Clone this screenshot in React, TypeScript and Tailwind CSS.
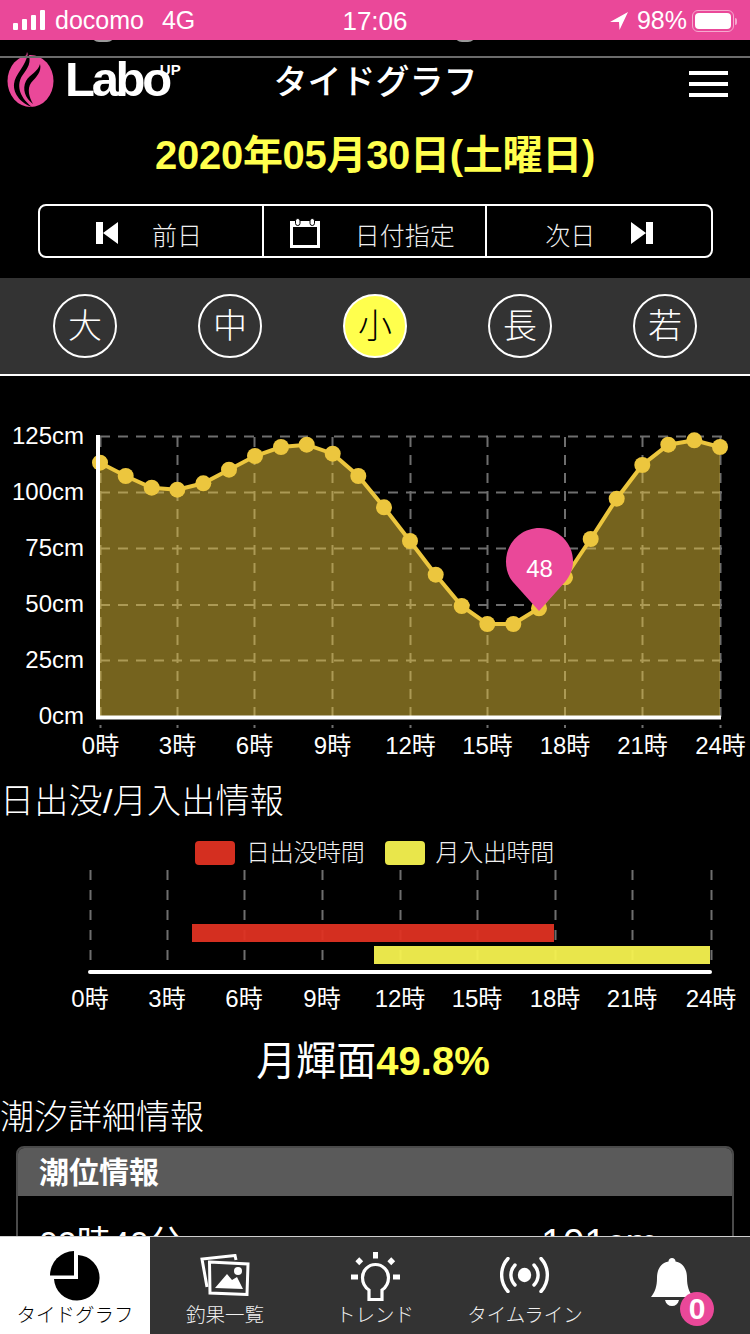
import React from "react";

const JP = "font-['Liberation_Sans','Noto_Sans_CJK_JP',sans-serif]";

const tidePoints: [number, number][] = [
  [100, 462.7], [125.7, 476], [151.7, 487.7], [177.3, 489.7], [203.3, 483.3],
  [229, 469.7], [255, 456], [281, 447], [306.7, 444.7], [332.7, 453.7],
  [358.3, 476], [384, 507.3], [410, 541], [435.7, 574.7], [461.7, 606],
  [487.3, 624], [513.3, 624], [539, 608.3], [565, 577.3], [590.7, 539],
  [616.7, 498.7], [642.3, 465], [668.3, 444.7], [694.3, 440.3], [720, 447],
];
const gridX = [100.5, 177.5, 254.5, 332.5, 410.5, 487.5, 565, 642.5, 720.5];
const gridY = [436.5, 492.5, 548.5, 605, 660.5];
const yLabels = ["125cm", "100cm", "75cm", "50cm", "25cm", "0cm"];
const hours = ["0時", "3時", "6時", "9時", "12時", "15時", "18時", "21時", "24時"];
const ages = ["大", "中", "小", "長", "若"];

function StatusBar() {
  return (
    <div className="flex h-10 items-center justify-between bg-[#ea4899] px-[13px] pt-[2px] font-['Liberation_Sans',sans-serif] text-[25px] text-white">
      <div className="flex w-[247px] items-center">
        <div className="-mt-[2px] flex items-end gap-[4px]">
          <span className="h-[7px] w-[5px] rounded-[1px] bg-white" />
          <span className="h-[11px] w-[5px] rounded-[1px] bg-white" />
          <span className="h-[15px] w-[5px] rounded-[1px] bg-white" />
          <span className="h-[20px] w-[5px] rounded-[1px] bg-white" />
        </div>
        <span className="ml-[10px]">docomo</span>
        <span className="ml-[18px]">4G</span>
      </div>
      <span className="text-[26px]">17:06</span>
      <div className="flex w-[247px] items-center justify-end">
        <svg width="18" height="18" viewBox="0 0 18 18" className="mr-[9px]">
          <path d="M18 0 L0 10 L9 10 L9.5 18 Z" fill="#fff" />
        </svg>
        <span>98%</span>
        <div className="ml-[5px] flex h-[22px] w-[42px] items-center rounded-[6px] border border-[#f6a9cf] p-[2px]">
          <div className="h-full w-full rounded-[4px] bg-white" />
        </div>
        <span className="ml-[1px] h-[7px] w-[2px] rounded-r-sm bg-[#f6a9cf]" />
      </div>
    </div>
  );
}

function Logo() {
  return (
    <div className="flex items-center">
      <svg width="47" height="56" viewBox="0 0 47 56" className="shrink-0">
        <path d="M20 0 C21 3 22 5 24 6 L18 10 Z" fill="#ea4899" />
        <ellipse cx="23.5" cy="29" rx="23" ry="26" fill="#ea4899" />
        <path d="M21 1 C25 10 21 16 15 24 C10 32 11 44 25 55 C15 52 6 42 7 32 C8 22 19 14 21 1 Z" fill="#000" />
        <path d="M33 12 C35 20 29 25 24 31 C20 37 22 45 26 52 C18 46 15 37 19 29 C23 22 31 20 33 12 Z" fill="#000" />
      </svg>
      <span className="ml-[11px] -mt-[2px] font-['Liberation_Sans',sans-serif] text-[49px] font-bold leading-none tracking-[-3.3px] text-white">
        Labo
      </span>
      <span className="-ml-[9px] mb-[22px] w-0 font-['Liberation_Sans',sans-serif] text-[15px] font-bold leading-none text-white">
        UP
      </span>
    </div>
  );
}

function Header() {
  return (
    <div>
      <div className="relative h-[18px] overflow-hidden border-b-2 border-[#6b6b6b]">
        <span className="absolute left-[91px] top-[-14px] h-[16px] w-[24px] rounded-full bg-[#9a9a9a]" />
        <span className="absolute left-[454px] top-[-14px] h-[16px] w-[22px] rounded-full bg-[#9a9a9a]" />
      </div>
      <div className="grid h-[56px] grid-cols-[1fr_auto_1fr] items-center pl-[7px] pr-[22px]">
        <div className="-mt-[12px]">
          <Logo />
        </div>
        <span className={`-mt-[8px] ml-[8px] mr-[-8px] text-[34px] font-medium leading-[44px] text-white ${JP}`}>
          タイドグラフ
        </span>
        <div className="-mt-[5px] flex flex-col items-end gap-[7px]">
          <span className="h-1 w-[39px] bg-white" />
          <span className="h-1 w-[39px] bg-white" />
          <span className="h-1 w-[39px] bg-white" />
        </div>
      </div>
    </div>
  );
}

function DateNav() {
  return (
    <div>
      <h1 className={`mt-[16px] text-center text-[40px] font-bold leading-[50px] tracking-[-0.3px] text-[#ffff4d] ${JP}`}>
        2020年05月30日(土曜日)
      </h1>
      <div className={`ml-[38px] mr-[37px] mt-[24px] grid h-[54px] grid-cols-3 divide-x-2 divide-white rounded-lg border-2 border-white text-[25px] font-light text-[#f0f0f0] ${JP}`}>
        <div className="flex items-center pl-[56px]">
          <svg width="22" height="22" viewBox="0 0 22 22" fill="#fff" className="mt-[4px]">
            <path d="M0 0h7v22H0z M7 11 L22 0 V22 Z" />
          </svg>
          <span className="ml-[34px] mt-[12px]">前日</span>
        </div>
        <div className="flex items-center pl-[26px]">
          <svg width="30" height="30" viewBox="0 0 30 30" fill="none" className="mt-[4px]">
            <path d="M1.5 5h27v23.5h-27z" stroke="#fff" strokeWidth="3" />
            <path d="M0 3h30v6H0z" fill="#fff" />
            <rect x="5.5" y="0.5" width="4.5" height="7" rx="2.2" fill="#fff" stroke="#000" strokeWidth="1" />
            <rect x="20" y="0.5" width="4.5" height="7" rx="2.2" fill="#fff" stroke="#000" strokeWidth="1" />
          </svg>
          <span className="ml-[35px] mt-[12px]">日付指定</span>
        </div>
        <div className="flex items-center pl-[58px]">
          <span className="mt-[12px]">次日</span>
          <svg width="22" height="22" viewBox="0 0 22 22" fill="#fff" className="ml-[36px] mt-[4px]">
            <path d="M15 0h7v22h-7z M15 11 L0 0 V22 Z" />
          </svg>
        </div>
      </div>
    </div>
  );
}

function AgeTabs() {
  return (
    <div className="mt-[20px] flex h-[98px] items-center justify-between border-b-2 border-white bg-[#333333] px-[53px]">
      {ages.map((age) => {
        const active = age === "小";
        return (
          <span
            key={age}
            className={`flex h-[64px] w-[64px] items-center justify-center rounded-full border-2 border-white text-[34px] font-light leading-none ${JP} ${
              active ? "bg-[#ffff4d] text-black" : "text-white"
            }`}
          >
            {age}
          </span>
        );
      })}
    </div>
  );
}

function TideChart() {
  const line = tidePoints.map(([x, y]) => `${x},${y}`).join(" ");
  const area = `100,717 ${line} 720,717`;
  return (
    <svg width="750" height="388" viewBox="0 376 750 388" className="block">
      {gridY.map((y) => (
        <line key={y} x1="100" x2="722" y1={y} y2={y} stroke="#6e6e6e" strokeWidth="2" strokeDasharray="10 8" />
      ))}
      {gridX.map((x) => (
        <line key={x} x1={x} x2={x} y1="437" y2="728" stroke="#6e6e6e" strokeWidth="2" strokeDasharray="10 8" />
      ))}
      <polygon points={area} fill="#eac53c" fillOpacity="0.5" />
      <polyline points={line} fill="none" stroke="#ecc63e" strokeWidth="4" />
      {tidePoints.map(([x, y]) => (
        <circle key={x} cx={x} cy={y} r="8" fill="#ecc63e" />
      ))}
      <path d="M98 435 V717.5 H721" fill="none" stroke="#fff" strokeWidth="4" />
      {yLabels.map((label, i) => (
        <text
          key={label}
          x="84"
          y={444 + i * 56}
          textAnchor="end"
          fill="#fff"
          fontSize="24"
          fontFamily="'Liberation Sans', sans-serif"
        >
          {label}
        </text>
      ))}
      {hours.map((label, i) => (
        <text
          key={label}
          x={gridX[i]}
          y="754"
          textAnchor="middle"
          fill="#fff"
          fontSize="24"
          fontFamily="'Liberation Sans', 'Noto Sans CJK JP', sans-serif"
        >
          {label}
        </text>
      ))}
      <path
        d="M539 611 L513 582 C508 576 506 569 506 561.5 C506 543 521 528 539.5 528 C558 528 573 543 573 561.5 C573 569 570 576 565 582 Z"
        fill="#ea4899"
      />
      <text x="539.5" y="577" textAnchor="middle" fill="#fff" fontSize="24" fontFamily="'Liberation Sans', sans-serif">
        48
      </text>
    </svg>
  );
}

function SunMoon() {
  const barX = [90, 167, 244, 322, 400, 477, 555, 632, 711];
  return (
    <div>
      <h2 className={`mt-[15px] text-[34px] font-light leading-[44px] tracking-[0.3px] text-white ${JP}`}>日出没/月入出情報</h2>
      <div className={`mt-[17px] flex h-[26px] items-center justify-center pr-[1px] text-[24px] font-light tracking-[-0.3px] text-[#f0f0f0] ${JP}`}>
        <span className="h-[24px] w-[40px] rounded-[4px] bg-[#d42f20]" />
        <span className="ml-[11px]">日出没時間</span>
        <span className="ml-[20px] h-[24px] w-[40px] rounded-[4px] bg-[#e9e64b]" />
        <span className="ml-[11px]">月入出時間</span>
      </div>
      <div className="relative mt-[4px] h-[104px]">
        <svg width="750" height="90" viewBox="0 0 750 90" className="absolute left-0 top-0">
          {barX.map((x) => (
            <line key={x} x1={x + 0.5} x2={x + 0.5} y1="0" y2="90" stroke="#6e6e6e" strokeWidth="2" strokeDasharray="10 10" />
          ))}
        </svg>
        <div className="absolute left-[192px] top-[54px] h-[18px] w-[362px] bg-[#df3122]/95" />
        <div className="absolute left-[374px] top-[76px] h-[18px] w-[336px] bg-[#f5f24f]/95" />
        <div className="absolute left-[88px] top-[100px] h-1 w-[624px] rounded-full bg-white" />
      </div>
      <div className="relative mt-[9px] h-[32px]">
        {hours.map((label, i) => (
          <span
            key={label}
            className={`absolute top-0 -translate-x-1/2 whitespace-nowrap text-[24px] leading-[32px] text-white ${JP}`}
            style={{ left: barX[i] }}
          >
            {label}
          </span>
        ))}
      </div>
    </div>
  );
}

function TideDetail() {
  return (
    <div>
      <p className={`mt-[20px] pr-[4px] text-center text-[40px] leading-[52px] text-white ${JP}`}>
        月輝面<span className="font-bold text-[#ffff4d]">49.8%</span>
      </p>
      <h2 className={`mt-[8px] text-[34px] font-light leading-[44px] text-white ${JP}`}>潮汐詳細情報</h2>
      <div className="mx-[16px] mt-[7px] overflow-hidden rounded-t-lg border-2 border-[#4a4a4a]">
        <div className={`flex h-[48px] items-center bg-[#5a5a5a] pl-[21px] text-[30px] font-bold text-white ${JP}`}>
          潮位情報
        </div>
        <div className={`flex items-center justify-between pl-[21px] pr-[74px] pt-[18px] text-white ${JP}`}>
          <span className="text-[34px]">09時40分</span>
          <span className="text-[39px]">101cm</span>
        </div>
      </div>
    </div>
  );
}

function NavItem({ label, active, children }: { label: string; active?: boolean; children: React.ReactNode }) {
  return (
    <div className={`relative flex w-[150px] flex-col items-center ${active ? "bg-white text-black" : "text-[#f0f0f0]"}`}>
      <div className="flex h-[65px] items-end justify-center">{children}</div>
      <span className={`text-[19.5px] font-light leading-[26px] ${JP}`}>{label}</span>
    </div>
  );
}

function BottomNav() {
  return (
    <div className="absolute bottom-0 left-0 flex h-[98px] w-[750px] border-t border-[#cfcfcf] bg-[#333333]">
      <NavItem label="タイドグラフ" active>
        <svg width="50" height="50" viewBox="0 0 50 50" fill="#000" className="mb-[1px]">
          <path d="M28 4 A22.8 22.8 0 1 1 4 28 H28 Z" />
          <path d="M24 0 V24.5 H0 A24.5 24.5 0 0 1 24 0 Z" />
        </svg>
      </NavItem>
      <NavItem label="釣果一覧">
        <svg width="50" height="42" viewBox="0 0 50 42" fill="none" className="mb-[6px]">
          <path d="M7 33 L2 5 L35 1.5 L36 6" stroke="#fff" strokeWidth="3" />
          <path d="M9.5 8 L48 10 L47 40.5 L10 39 Z" stroke="#fff" strokeWidth="3" fill="#333333" />
          <path d="M15 34 L27 20 L32 26 L37 23 L43 35 Z" fill="#fff" />
          <circle cx="38" cy="17" r="4" fill="#fff" />
        </svg>
      </NavItem>
      <NavItem label="トレンド">
        <svg width="49" height="49" viewBox="0 0 49 49" fill="none" className="mb-[1px]">
          <path d="M24.5 0 V6.5 M0 25 H7 M42 25 H49" stroke="#fff" strokeWidth="5" />
          <rect x="5.5" y="6.5" width="5.5" height="5.5" transform="rotate(45 8.25 9.25)" fill="#fff" />
          <rect x="37.5" y="6.5" width="5.5" height="5.5" transform="rotate(45 40.25 9.25)" fill="#fff" />
          <path
            d="M18 47.5 V38 C13.5 35 11.5 30.5 11.5 25.5 A13 13 0 0 1 37.5 25.5 C37.5 30.5 35.5 35 31 38 V47.5 Z"
            stroke="#fff"
            strokeWidth="3.2"
          />
        </svg>
      </NavItem>
      <NavItem label="タイムライン">
        <svg width="50" height="36" viewBox="0 0 50 36" fill="none" className="mb-[9px]">
          <ellipse cx="24.5" cy="18" rx="6.7" ry="7.2" fill="#fff" />
          <path d="M15 8 C9.5 14 9.5 22 15 28 M34 8 C39.5 14 39.5 22 34 28" stroke="#fff" strokeWidth="3.4" strokeLinecap="round" />
          <path d="M8 1.5 C-0.5 11 -0.5 25 8 34.5 M41 1.5 C49.5 11 49.5 25 41 34.5" stroke="#fff" strokeWidth="3.4" strokeLinecap="round" />
        </svg>
      </NavItem>
      <NavItem label="">
        <svg width="42" height="48" viewBox="0 0 42 48" fill="#fff" className="mb-[-4px] mr-[6px]">
          <path d="M21 0 C23 0 24.5 1.5 24.5 3.5 C32 5 36 11 36 20 C36 28 38 34 42 39 H0 C4 34 6 28 6 20 C6 11 10 5 17.5 3.5 C17.5 1.5 19 0 21 0 Z" />
          <path d="M14 42 H28 C27 46 24.5 48 21 48 C17.5 48 15 46 14 42 Z" />
        </svg>
        <span className="absolute left-[80px] top-[55px] flex h-[34px] w-[34px] items-center justify-center rounded-full bg-[#ea4899] font-['Liberation_Sans',sans-serif] text-[30px] font-bold leading-none text-white">
          0
        </span>
      </NavItem>
    </div>
  );
}

export default function App() {
  return (
    <div className="relative h-[1334px] w-[750px] overflow-hidden bg-black">
      <StatusBar />
      <Header />
      <DateNav />
      <AgeTabs />
      <TideChart />
      <SunMoon />
      <TideDetail />
      <BottomNav />
    </div>
  );
}
